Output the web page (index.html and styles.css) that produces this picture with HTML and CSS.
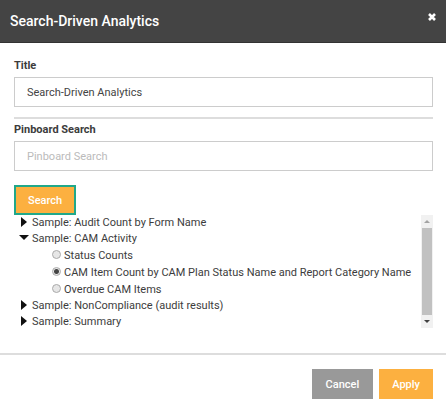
FILE: index.html
```html
<!DOCTYPE html>
<html lang="en">
<head>
  <meta charset="UTF-8">
  <meta name="viewport" content="width=device-width, initial-scale=1.0">
  <title>Search-Driven Analytics</title>
  <link rel="stylesheet" href="styles.css">
</head>
<body>
  <form class="modal">
    <!-- Header -->
    <div class="modal-header">
      <h1>Search-Driven Analytics</h1>
      <button type="button" class="close" aria-label="Close">
        <svg width="8" height="8" viewBox="0 0 8 8"><path d="M1 1L7 7M7 1L1 7" stroke="#fff" stroke-width="2.6"/></svg>
      </button>
    </div>

    <!-- Body -->
    <div class="modal-body">
      <div class="field">
        <label for="title">Title</label>
        <input type="text" id="title" class="text-input" value="Search-Driven Analytics">
      </div>
      <hr>
      <div class="field">
        <label for="search">Pinboard Search</label>
        <input type="text" id="search" class="text-input" placeholder="Pinboard Search">
      </div>
      <button type="button" class="btn btn-search">Search</button>

      <div class="results">
        <div class="tree">
          <details>
            <summary>Sample: Audit Count by Form Name</summary>
          </details>
          <details open>
            <summary>Sample: CAM Activity</summary>
            <div class="options">
              <label><input type="radio" name="item">Status Counts</label>
              <label><input type="radio" name="item" checked>CAM Item Count by CAM Plan Status Name and Report Category Name</label>
              <label><input type="radio" name="item">Overdue CAM Items</label>
            </div>
          </details>
          <details>
            <summary>Sample: NonCompliance (audit results)</summary>
          </details>
          <details>
            <summary>Sample: Summary</summary>
          </details>
        </div>
        <div class="scrollbar">
          <svg width="6" height="3" viewBox="0 0 6 3"><path d="M0 3L3 0L6 3Z" fill="#a3a3a3"/></svg>
          <div class="thumb"></div>
          <svg width="6" height="3" viewBox="0 0 6 3"><path d="M0 0L3 3L6 0Z" fill="#404040"/></svg>
        </div>
      </div>
    </div>

    <!-- Footer -->
    <div class="modal-footer">
      <button type="button" class="btn btn-cancel">Cancel</button>
      <button type="button" class="btn">Apply</button>
    </div>
  </form>
</body>
</html>
```
FILE: styles.css
```css
* {
  box-sizing: border-box;
  margin: 0;
  padding: 0;
}

body {
  font-family: Roboto, Arial, sans-serif;
  font-size: 11px;
  line-height: 16px;
  color: #3c3c3c;
  background: #fff;
}

button,
input {
  font-family: inherit;
  font-size: inherit;
}

.modal-header {
  display: flex;
  justify-content: space-between;
  align-items: flex-start;
  padding: 11px 10px;
  background: #444;
  border-bottom: 1px solid #333;
}

h1 {
  font-size: 14px;
  font-weight: 500;
  line-height: 20px;
  color: #fff;
}

.close {
  display: flex;
  padding: 2px 0;
  background: none;
  border: none;
  cursor: pointer;
}

.modal-body {
  padding: 15px 13px 25px 14px;
}

.field label {
  display: block;
  margin-bottom: 3px;
  font-weight: 700;
  color: #3c3c3c;
}

.text-input {
  display: block;
  width: 100%;
  height: 30px;
  padding: 0 12px;
  color: #444;
  background: #fff;
  border: 1px solid #ccc;
}

.text-input::placeholder {
  color: #bbb;
}

hr {
  margin: 10px 0 3px;
  border: none;
  border-top: 2px solid #ddd;
}

.btn {
  height: 30px;
  padding: 0 13px;
  font-weight: 500;
  color: #fff;
  background: #fcb040;
  border: none;
  cursor: pointer;
}

.btn-search {
  display: block;
  margin-top: 14px;
  padding: 0 12px;
  border: 2px solid #20a88a;
}

.btn-cancel {
  padding: 0 14px;
  background: #999;
}

.results {
  display: flex;
  max-height: 113px;
}

.tree {
  flex: 1;
  min-width: 0;
  overflow: hidden;
  white-space: nowrap;
}

summary {
  display: flex;
  align-items: center;
  cursor: pointer;
  list-style: none;
}

/* expand arrow */
summary::before {
  content: "";
  width: 6px;
  height: 10px;
  margin: 0 5px 2px 7px;
  background: #111;
  clip-path: polygon(0 0, 100% 50%, 0 100%);
}

details[open] > summary::before {
  width: 10px;
  height: 5px;
  margin: 0 3px 3px 5px;
  clip-path: polygon(0 0, 100% 0, 50% 100%);
}

.options label {
  display: flex;
  align-items: center;
  height: 17px;
  padding-left: 38px;
}

.options input {
  appearance: none;
  flex: none;
  width: 9px;
  height: 9px;
  margin: 0 3px 2px 0;
  background: #e6e6e6;
  border: 1px solid #aaa;
  border-radius: 50%;
}

.options input:checked {
  background: radial-gradient(circle, #444 2px, #e6e6e6 3px);
}

.scrollbar {
  display: flex;
  flex-direction: column;
  align-items: center;
  gap: 5px;
  width: 12px;
  padding: 5px 0;
  background: #f1f1f1;
}

.thumb {
  flex: 1;
  width: 10px;
  background: #c1c1c1;
}

.modal-footer {
  display: flex;
  justify-content: flex-end;
  gap: 6px;
  padding: 14px 13px 10px;
  border-top: 2px solid #ddd;
}
```
